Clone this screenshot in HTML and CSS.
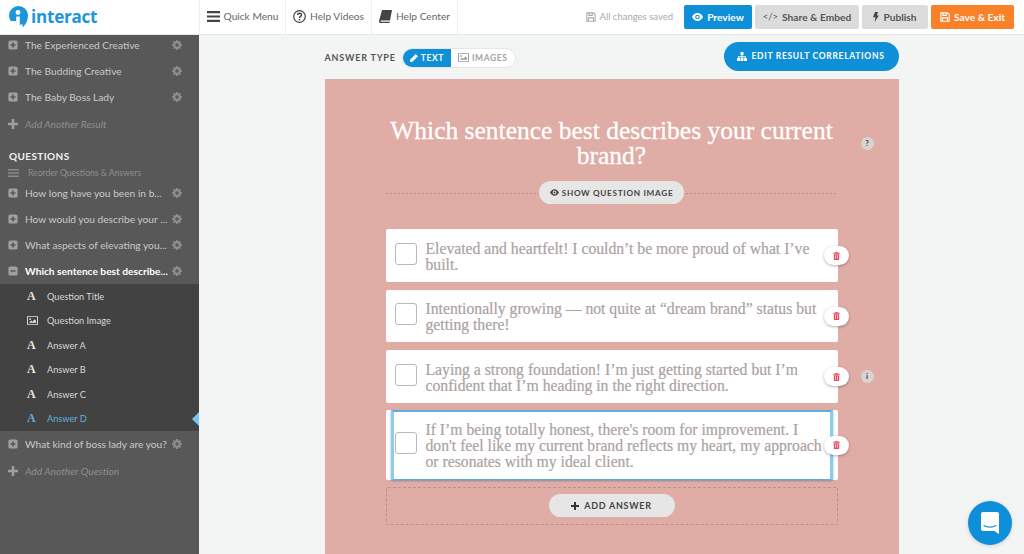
FILE: index.html
```html
<!DOCTYPE html>
<html lang="en">
<head>
    <meta charset="UTF-8">
    <meta name="viewport" content="width=device-width, initial-scale=1.0">
    <title>Interact - Quiz Editor</title>
    <link rel="stylesheet" href="styles.css">
</head>
<body>
    <svg class="sprite" width="0" height="0" aria-hidden="true">
        <symbol id="i-plus-box" viewBox="0 0 12 12">
            <path fill-rule="evenodd" d="M2.500 0.500h7a2 2 0 0 1 2 2v7a2 2 0 0 1-2 2h-7a2 2 0 0 1-2-2v-7a2 2 0 0 1 2-2zM5 3v2H3v2h2v2h2V7h2V5H7V3z"/>
        </symbol>
        <symbol id="i-minus-box" viewBox="0 0 12 12">
            <path fill-rule="evenodd" d="M2.500 0.500h7a2 2 0 0 1 2 2v7a2 2 0 0 1-2 2h-7a2 2 0 0 1-2-2v-7a2 2 0 0 1 2-2zM3 5v2h6V5z"/>
        </symbol>
        <symbol id="i-gear" viewBox="0 0 12 12">
            <path fill-rule="evenodd" d="M5 0h2l.3 1.600 1.100.5L9.800 1.200l1.100 1.100-.9 1.400.5 1.100L12 5v2l-1.500.3-.5 1.100.9 1.400-1.100 1.100-1.400-.9-1.100.5L7 12H5l-.3-1.500-1.100-.5-1.400.9-1.100-1.100.9-1.400-.5-1.100L0 7V5l1.500-.3.5-1.100-.9-1.400 1.100-1.100 1.400.9 1.100-.5zM6 4a2 2 0 1 0 0 4 2 2 0 0 0 0-4z"/>
        </symbol>
        <symbol id="i-plus" viewBox="0 0 12 12">
            <path d="M4.500 0h3v4.500H12v3H7.500V12h-3V7.500H0v-3h4.500z"/>
        </symbol>
        <symbol id="i-eye" viewBox="0 0 14 10">
            <path fill-rule="evenodd" d="M7 0c3 0 5.500 2 7 5-1.500 3-4 5-7 5S1.500 8 0 5c1.500-3 4-5 7-5zm0 2a3 3 0 1 0 0 6 3 3 0 0 0 0-6zm0 1.500a1.500 1.500 0 1 1 0 3 1.500 1.500 0 0 1 0-3z"/>
        </symbol>
        <symbol id="i-trash" viewBox="0 0 10 12">
            <path fill-rule="evenodd" d="M3.500 0h3l.5 1h3v1.500H0V1h3zM1 3.500h8V11a1 1 0 0 1-1 1H2a1 1 0 0 1-1-1zM3 5v5h1V5zm3 0v5h1V5z"/>
        </symbol>
        <symbol id="i-floppy" viewBox="0 0 12 12">
            <path fill="none" stroke="currentColor" stroke-width="1.300" d="M1 1h8l2 2v8H1zM3.500 1v3h4V1M3 11V7h6v4"/>
        </symbol>
        <symbol id="i-picture" viewBox="0 0 14 11">
            <path fill-rule="evenodd" d="M0 0h14v11H0zm1.200 1.200v8.600h11.600V1.200zM2.500 8.500l2.800-3 1.800 1.600 2.600-3.300 1.800 2.200v2.500zM4 2.500a1.200 1.200 0 1 1 0 2.400 1.200 1.200 0 0 1 0-2.400z"/>
        </symbol>
    </svg>

    <header class="topbar">
        <div class="brand">
            <svg class="brand-mark" viewBox="0 0 19 21" width="19" height="21">
                <path fill="#1b96d8" d="M9.500 0a9.500 9.500 0 0 1 9.500 9.500c0 4.500-1.800 8.500-4.800 11.500l-.7-.2V18A9.500 9.500 0 0 1 0 9.500 9.500 9.500 0 0 1 9.500 0z"/>
                <circle cx="9" cy="6.500" r="2.400" fill="#fff"/>
                <path fill="#fff" d="M7.200 10.500h3.600V19H7.200z"/>
                <path fill="#fff" d="M0 15h7.500v6H0z"/>
            </svg>
            <span class="brand-name">interact</span>
        </div>
        <nav class="topnav">
            <a class="topnav-item">
                <svg width="13" height="11" viewBox="0 0 13 11"><path fill="#444" d="M0 0h13v2.200H0zM0 4.400h13v2.200H0zM0 8.800h13V11H0z"/></svg>
                Quick Menu
            </a>
            <a class="topnav-item">
                <svg width="13" height="13" viewBox="0 0 13 13"><circle cx="6.500" cy="6.500" r="5.800" fill="none" stroke="#444" stroke-width="1.200"/><path fill="none" stroke="#444" stroke-width="1.500" d="M4.600 5.100c0-2.500 3.900-2.500 3.900-.2 0 1.400-2 1.500-2 3"/><path fill="#444" d="M5.700 8.900h1.600v1.500H5.700z"/></svg>
                Help Videos
            </a>
            <a class="topnav-item">
                <svg width="13" height="13" viewBox="0 0 13 13"><path fill="#444" d="M3 0h10l-2 10.500H2.200c-.9 0-.9 1.200 0 1.200h8.600l-.2 1.300H1.500C.3 13-.2 12 .1 10.800z"/></svg>
                Help Center
            </a>
        </nav>
        <div class="topbar-actions">
            <span class="saved">
                <svg width="10" height="10"><use href="#i-floppy"/></svg>
                All changes saved
            </span>
            <a class="btn btn-blue btn-preview"><svg width="11" height="8" fill="currentColor"><use href="#i-eye"/></svg>Preview</a>
            <a class="btn btn-grey btn-share"><span class="code-glyph">&lt;/&gt;</span>Share &amp; Embed</a>
            <a class="btn btn-grey btn-publish">
                <svg width="6" height="10" viewBox="0 0 6 10"><path fill="#444" d="M2 0h3L3.800 3.600H6L1.500 10l1-4.800H0z"/></svg>
                Publish
            </a>
            <a class="btn btn-orange btn-save"><svg width="10" height="10"><use href="#i-floppy"/></svg>Save &amp; Exit</a>
        </div>
    </header>

    <div class="workspace">
        <aside class="sidebar">
            <ul class="side-list side-list-results">
                <li class="side-row"><svg class="row-toggle"><use href="#i-plus-box"/></svg><span class="row-label">The Experienced Creative</span><svg class="row-gear"><use href="#i-gear"/></svg></li>
                <li class="side-row"><svg class="row-toggle"><use href="#i-plus-box"/></svg><span class="row-label">The Budding Creative</span><svg class="row-gear"><use href="#i-gear"/></svg></li>
                <li class="side-row"><svg class="row-toggle"><use href="#i-plus-box"/></svg><span class="row-label">The Baby Boss Lady</span><svg class="row-gear"><use href="#i-gear"/></svg></li>
                <li class="side-row side-add"><svg class="row-toggle"><use href="#i-plus"/></svg><span class="row-label">Add Another Result</span></li>
            </ul>

            <h3 class="side-heading">QUESTIONS</h3>
            <div class="reorder">
                <svg width="11" height="8" viewBox="0 0 11 8"><path fill="#8a8a8a" d="M0 0h11v1.400H0zM0 3.300h11v1.400H0zM0 6.600h11V8H0z"/></svg>
                <span>Reorder Questions &amp; Answers</span>
            </div>

            <ul class="side-list">
                <li class="side-row"><svg class="row-toggle"><use href="#i-plus-box"/></svg><span class="row-label">How long have you been in b...</span><svg class="row-gear"><use href="#i-gear"/></svg></li>
                <li class="side-row"><svg class="row-toggle"><use href="#i-plus-box"/></svg><span class="row-label">How would you describe your ...</span><svg class="row-gear"><use href="#i-gear"/></svg></li>
                <li class="side-row"><svg class="row-toggle"><use href="#i-plus-box"/></svg><span class="row-label">What aspects of elevating you...</span><svg class="row-gear"><use href="#i-gear"/></svg></li>
                <li class="side-row side-open"><svg class="row-toggle"><use href="#i-minus-box"/></svg><span class="row-label">Which sentence best describe...</span><svg class="row-gear"><use href="#i-gear"/></svg></li>
            </ul>

            <ul class="sub-list">
                <li class="sub-row"><span class="glyph-a">A</span>Question Title</li>
                <li class="sub-row"><svg class="glyph-pic" width="11" height="9" fill="currentColor"><use href="#i-picture"/></svg>Question Image</li>
                <li class="sub-row"><span class="glyph-a">A</span>Answer A</li>
                <li class="sub-row"><span class="glyph-a">A</span>Answer B</li>
                <li class="sub-row"><span class="glyph-a">A</span>Answer C</li>
                <li class="sub-row sub-current"><span class="glyph-a">A</span>Answer D</li>
            </ul>

            <ul class="side-list">
                <li class="side-row"><svg class="row-toggle"><use href="#i-plus-box"/></svg><span class="row-label">What kind of boss lady are you?</span><svg class="row-gear"><use href="#i-gear"/></svg></li>
                <li class="side-row side-add"><svg class="row-toggle"><use href="#i-plus"/></svg><span class="row-label">Add Another Question</span></li>
            </ul>
        </aside>

        <main class="stage">
            <div class="stage-bar">
                <div class="type-picker">
                    <span class="type-label">ANSWER TYPE</span>
                    <div class="type-toggle">
                        <span class="type-opt type-on">
                            <svg width="8" height="8" viewBox="0 0 8 8"><path fill="#fff" d="M5.800 0L8 2.200 2.400 7.800 0 8l.2-2.400z"/></svg>
                            TEXT
                        </span>
                        <span class="type-opt">
                            <svg width="11" height="9" fill="#9a9a9a"><use href="#i-picture"/></svg>
                            IMAGES
                        </span>
                    </div>
                </div>
                <a class="pill-blue">
                    <svg width="10" height="9" viewBox="0 0 10 9"><path fill="#fff" d="M3.500 0h3v3h-1v1.200H9V6h1v3H7V6h1.200V5.200H5.500V6h1v3h-3V6h1v-.8H1.800V6H3v3H0V6h1V4.200h3.500V3h-1z"/></svg>
                    EDIT RESULT CORRELATIONS
                </a>
            </div>

            <section class="panel">
                <div class="panel-inner">
                    <h1 class="question">Which sentence best describes your current brand?</h1>
                    <span class="hint hint-help">?</span>

                    <div class="image-toggle">
                        <a class="pill-grey"><svg width="9" height="7" fill="#444"><use href="#i-eye"/></svg>SHOW QUESTION IMAGE</a>
                    </div>

                    <div class="answers">
                        <div class="answer">
                            <span class="check"></span>
                            <p class="answer-text">Elevated and heartfelt! I couldn’t be more proud of what I’ve built.</p>
                            <a class="del"><svg width="7" height="8" fill="#e8485f"><use href="#i-trash"/></svg></a>
                        </div>
                        <div class="answer">
                            <span class="check"></span>
                            <p class="answer-text">Intentionally growing — not quite at “dream brand” status but getting there!</p>
                            <a class="del"><svg width="7" height="8" fill="#e8485f"><use href="#i-trash"/></svg></a>
                        </div>
                        <div class="answer">
                            <span class="check"></span>
                            <p class="answer-text">Laying a strong foundation! I’m just getting started but I’m confident that I’m heading in the right direction.</p>
                            <a class="del"><svg width="7" height="8" fill="#e8485f"><use href="#i-trash"/></svg></a>
                            <span class="hint hint-info">i</span>
                        </div>
                        <div class="answer answer-active">
                            <span class="check"></span>
                            <p class="answer-text">If I’m being totally honest, there's room for improvement. I<br>don't feel like my current brand reflects my heart, my approach<br>or resonates with my ideal client.</p>
                            <a class="del"><svg width="7" height="8" fill="#e8485f"><use href="#i-trash"/></svg></a>
                        </div>
                    </div>

                    <div class="add-answer">
                        <a class="pill-grey pill-add"><svg width="8" height="8" fill="#333"><use href="#i-plus"/></svg>ADD ANSWER</a>
                    </div>
                </div>
            </section>
        </main>
    </div>

    <a class="chat-launcher">
        <svg width="18" height="22" viewBox="0 0 18 22">
            <path fill="#fff" d="M2 0h14a2 2 0 0 1 2 2v20l-4.500-3H2a2 2 0 0 1-2-2V2a2 2 0 0 1 2-2z"/>
            <path fill="none" stroke="#0f8fd8" stroke-width="1.200" stroke-linecap="round" d="M3 13.500c3 2.200 9 2.200 12 0"/>
        </svg>
    </a>
</body>
</html>
```

FILE: styles.css
```css
* {
    box-sizing: border-box;
}
html, body {
    height: 100%;
}
body {
    margin: 0;
    height: 554px;
    overflow: hidden;
    background: #f3f4f4;
    color: #444;
    font-family: Lato, "Liberation Sans", sans-serif;
    display: flex;
    flex-direction: column;
}
ul {
    list-style: none;
    margin: 0;
    padding: 0;
}
.sprite {
    position: absolute;
}

/* top bar */
.topbar {
    height: 35px;
    flex: none;
    background: #fff;
    border-bottom: 1px solid #e8e8e8;
    display: flex;
    align-items: stretch;
}
.brand {
    width: 199px;
    display: flex;
    align-items: center;
    padding: 0 0 1px 9px;
    gap: 3px;
}
.brand-name {
    font-family: "Open Sans", Lato, sans-serif;
    font-size: 17px;
    font-weight: 700;
    color: #1b96d8;
    letter-spacing: -0.2px;
}
.topnav {
    display: flex;
    border-left: 1px solid #f0f0f0;
}
.topnav-item {
    width: 86px;
    display: flex;
    align-items: center;
    justify-content: center;
    gap: 4px;
    padding-bottom: 2px;
    font-size: 10.2px;
    color: #666;
    border-right: 1px solid #f0f0f0;
    white-space: nowrap;
}
.topbar-actions {
    flex: 1;
    display: flex;
    align-items: center;
    justify-content: flex-end;
    padding: 0 10px 1px 0;
    gap: 3px;
}
.saved {
    display: flex;
    align-items: center;
    gap: 4px;
    font-size: 9.5px;
    color: #aaa;
    margin-right: 8px;
}
.btn {
    height: 24px;
    border-radius: 2px;
    display: flex;
    align-items: center;
    justify-content: center;
    gap: 4px;
    font-size: 10.2px;
    font-weight: 700;
    white-space: nowrap;
}
.btn-blue {
    background: #0f8fd8;
    color: #fff;
}
.btn-grey {
    background: #dcdcdc;
    color: #555;
}
.btn-orange {
    background: #fb8129;
    color: #fff;
}
.btn-preview { width: 68px; }
.btn-share { width: 104px; }
.btn-publish { width: 66px; }
.btn-save { width: 83px; }
.code-glyph {
    font-weight: 400;
    font-size: 9.5px;
}

/* sidebar */
.workspace {
    flex: 1;
    display: flex;
    min-height: 0;
}
.sidebar {
    width: 199px;
    flex: none;
    background: #585858;
    overflow: hidden;
    position: relative;
}
.side-list-results {
    margin-top: -3px;
}
.side-row {
    height: 26px;
    display: flex;
    align-items: center;
    padding: 0 17px 0 8px;
    color: #c9c9c9;
    font-size: 10.2px;
}
.row-toggle {
    width: 10px;
    height: 10px;
    fill: #a0a0a0;
    flex: none;
}
.row-label {
    margin-left: 7px;
    flex: 1;
    white-space: nowrap;
    overflow: hidden;
}
.row-gear {
    width: 10px;
    height: 10px;
    fill: #8e8e8e;
    flex: none;
}
.side-open {
    color: #fff;
    font-weight: 700;
}
.side-add {
    color: #8f8f8f;
    font-style: italic;
    height: 28px;
}
.side-heading {
    margin: 9px 0 0 9px;
    height: 18px;
    line-height: 18px;
    font-size: 10px;
    font-weight: 700;
    letter-spacing: 0.4px;
    color: #f0f0f0;
}
.reorder {
    height: 15px;
    display: flex;
    align-items: center;
    gap: 9px;
    padding-left: 8px;
    font-size: 8.6px;
    color: #8f8f8f;
}
.sub-list {
    background: #424242;
}
.sub-row {
    height: 24.5px;
    display: flex;
    align-items: center;
    padding-left: 27px;
    font-size: 9.2px;
    color: #d8d8d8;
    position: relative;
}
.glyph-a {
    width: 20px;
    font-family: "Liberation Serif", serif;
    font-size: 12px;
    font-weight: 700;
    color: #e4e4e4;
}
.glyph-pic {
    width: 11px;
    margin-right: 9px;
    color: #e4e4e4;
}
.sub-current {
    color: #62aede;
}
.sub-current .glyph-a {
    color: #62aede;
}
.sub-current::after {
    content: "";
    position: absolute;
    right: 0;
    top: 5px;
    border: 7px solid transparent;
    border-left: 0;
    border-right-color: #7cc4ee;
}

/* main area */
.stage {
    flex: 1;
    min-width: 0;
    display: flex;
    flex-direction: column;
    align-items: center;
}
.stage-bar {
    width: 574px;
    height: 44px;
    flex: none;
    display: flex;
    align-items: center;
    justify-content: space-between;
}
.type-picker {
    display: flex;
    align-items: center;
    gap: 6px;
    margin-top: 1px;
}
.type-label {
    font-size: 9px;
    font-weight: 700;
    letter-spacing: 0.8px;
    color: #555;
}
.type-toggle {
    display: flex;
    height: 20px;
    border-radius: 10px;
    overflow: hidden;
    background: #fff;
    border: 1px solid #e6e6e6;
}
.type-opt {
    display: flex;
    align-items: center;
    gap: 3px;
    padding: 0 7px;
    font-size: 8.5px;
    font-weight: 700;
    letter-spacing: 0.6px;
    color: #a5a5a5;
}
.type-on {
    background: #0f8fd8;
    color: #fff;
}
.pill-blue {
    width: 175px;
    height: 29px;
    border-radius: 15px;
    background: #0f8fd8;
    color: #fff;
    font-size: 8.5px;
    font-weight: 700;
    letter-spacing: 0.7px;
    display: flex;
    align-items: center;
    justify-content: center;
    gap: 4px;
    margin-bottom: 2px;
}
.panel {
    width: 574px;
    flex: 1;
    background: #dfaca6;
    min-height: 0;
}
.panel-inner {
    width: 452px;
    margin: 0 auto 0 61px;
    padding-top: 39px;
    position: relative;
}
.question {
    margin: 0;
    font-family: "Liberation Serif", serif;
    font-size: 25.5px;
    font-weight: 400;
    line-height: 25px;
    text-align: center;
    color: #fff;
    -webkit-text-stroke: 0.3px #fff;
}
.hint {
    position: absolute;
    width: 13px;
    height: 13px;
    border-radius: 50%;
    background: #d8d4d4;
    color: #444;
    font-size: 8px;
    font-weight: 700;
    line-height: 13px;
    text-align: center;
}
.hint-help {
    right: -36px;
    top: 58px;
}
.hint-info {
    right: -36px;
    top: 20px;
}
.image-toggle {
    margin-top: 13px;
    display: flex;
    justify-content: center;
    background: repeating-linear-gradient(90deg, #b98d88 0 2px, transparent 2px 4px) left 12px / 100% 1px no-repeat;
}
.pill-grey {
    height: 23px;
    padding: 0 11px;
    border-radius: 12px;
    background: #e6e6e6;
    color: #444;
    font-size: 8.2px;
    font-weight: 700;
    letter-spacing: 0.7px;
    display: flex;
    align-items: center;
    gap: 3px;
}
.answers {
    margin-top: 25px;
    display: flex;
    flex-direction: column;
    gap: 8px;
}
.answer {
    position: relative;
    min-height: 52.500px;
    background: #fff;
    border-radius: 2px;
    display: flex;
    align-items: center;
    padding: 8px 3px 8px 9px;
}
.answer-active {
    min-height: 70px;
    margin-top: -1px;
}
.answer-active .answer-text {
    white-space: nowrap;
}
.answer-active::before {
    content: "";
    position: absolute;
    top: 0;
    bottom: 0;
    left: 5px;
    right: 5px;
    border: 1px solid #62aede;
    border-top-width: 2px;
    border-left: 3px solid #8ccbf0;
    border-right: 3px solid #8ccbf0;
    box-shadow: 0 1px 2px rgba(30, 110, 170, 0.5);
    pointer-events: none;
}
.check {
    width: 22px;
    height: 22px;
    flex: none;
    margin-bottom: 3px;
    border: 1px solid #b8b8b8;
    border-radius: 3px;
    background: #fff;
}
.answer-text {
    margin: 3px 0 0 9px;
    font-family: "Liberation Serif", serif;
    font-size: 15.7px;
    line-height: 16px;
    color: #aba2a2;
    -webkit-text-stroke: 0.2px #aba2a2;
}
.del {
    position: absolute;
    right: -11px;
    top: 50%;
    width: 25px;
    height: 19px;
    margin-top: -9px;
    border-radius: 10px;
    background: #fff;
    box-shadow: 0 1px 3px rgba(0, 0, 0, 0.3);
    display: flex;
    align-items: center;
    justify-content: center;
}
.add-answer {
    margin-top: 7px;
    height: 38px;
    border: 1px dashed #c08e88;
    border-radius: 2px;
    display: flex;
    align-items: center;
    justify-content: center;
}
.pill-add {
    width: 126px;
    justify-content: center;
    font-size: 9px;
    gap: 5px;
}

.chat-launcher {
    position: fixed;
    right: 12px;
    bottom: 9px;
    width: 44px;
    height: 44px;
    border-radius: 50%;
    background: #0f8fd8;
    display: flex;
    align-items: center;
    justify-content: center;
    box-shadow: 0 1px 4px rgba(0, 0, 0, 0.15);
}
```
